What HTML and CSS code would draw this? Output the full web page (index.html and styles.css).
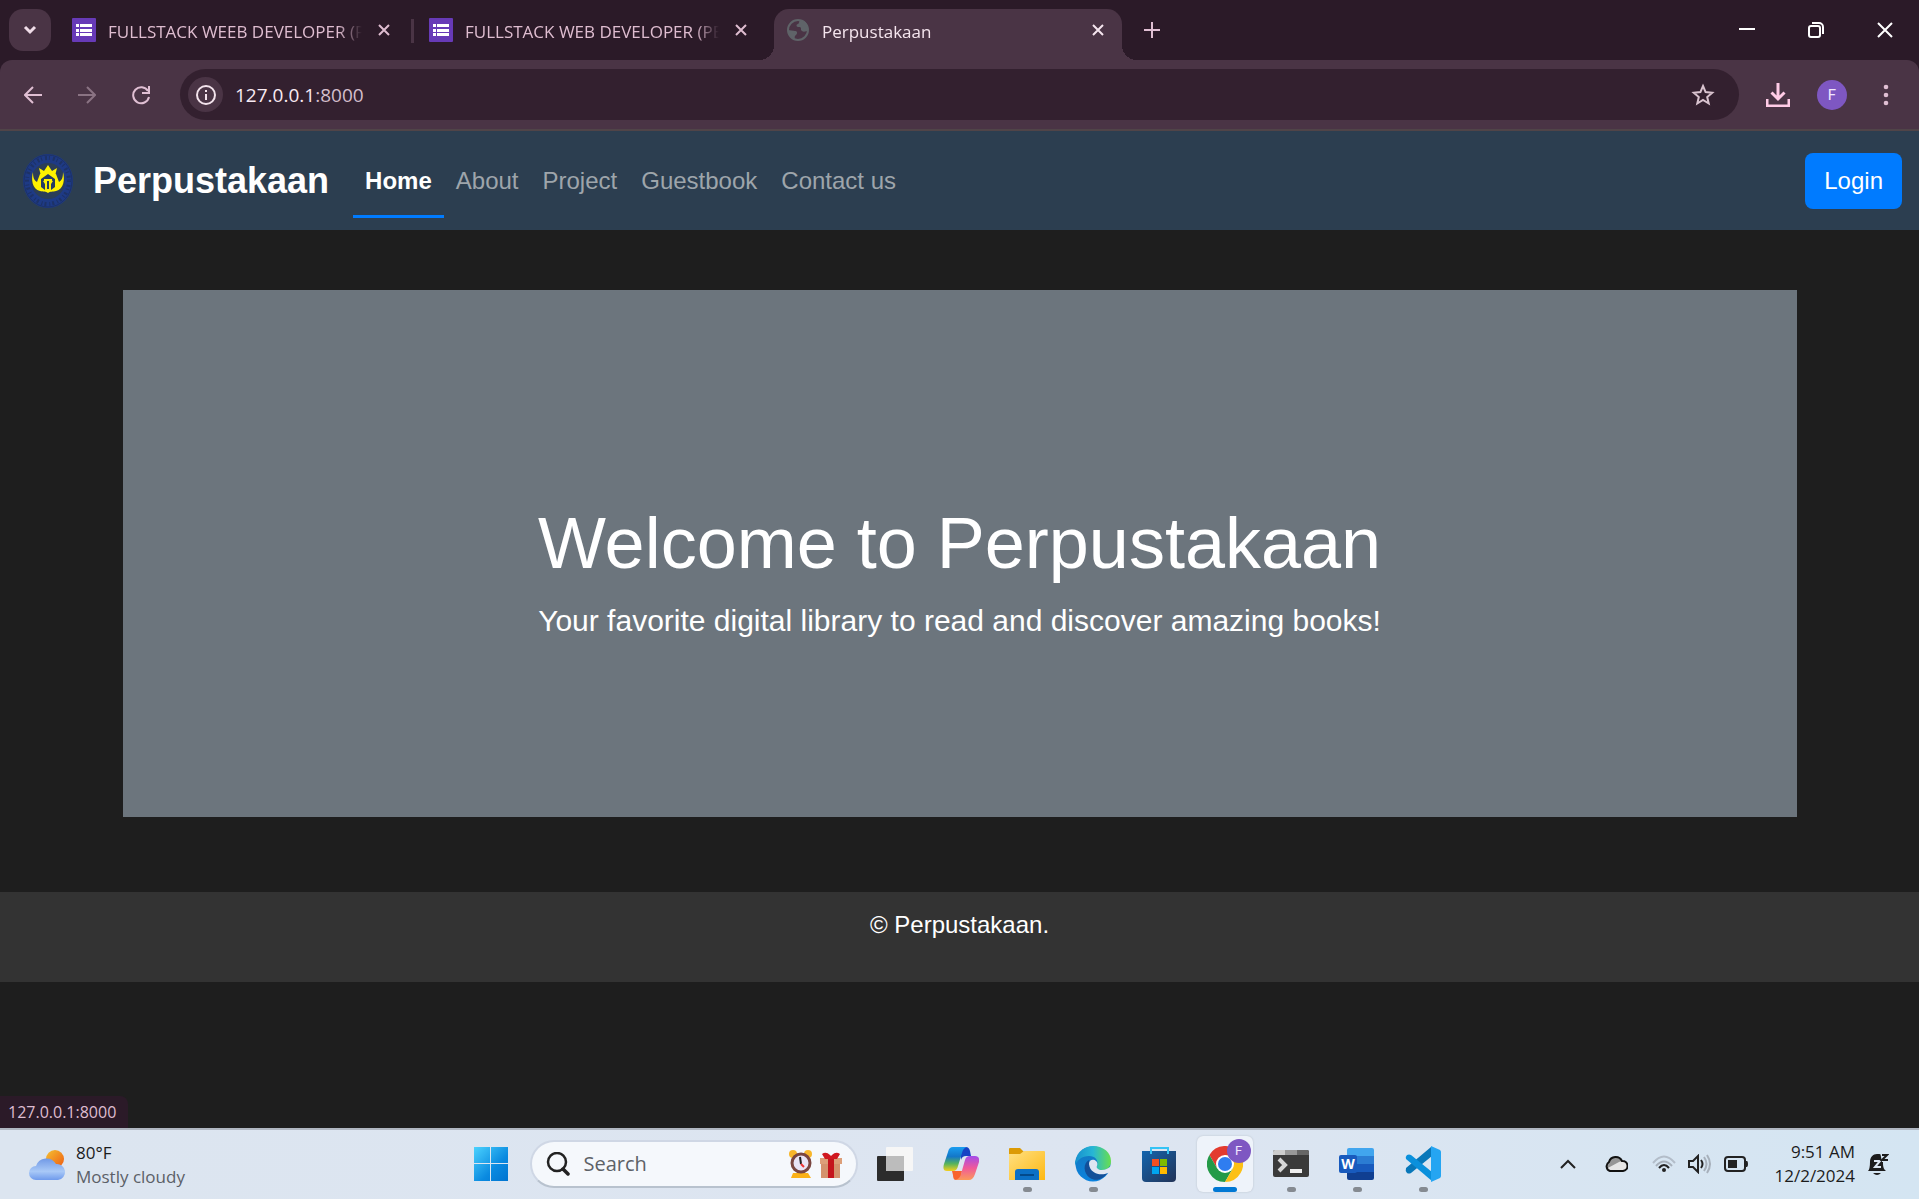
FILE: index.html
```html
<!DOCTYPE html>
<html lang="en">
<head>
<meta charset="utf-8">
<title>Perpustakaan</title>
<link rel="stylesheet" href="styles.css">
</head>
<body>
<div class="tabstrip">
  <button class="tab-search" aria-label="Search tabs"><svg width="14" height="10" viewBox="0 0 14 10"><path d="M2 2l5 5 5-5" fill="none" stroke="#f0dde8" stroke-width="3"/></svg></button>
  <div class="tab">
    <svg class="favicon" viewBox="0 0 24 24"><rect width="24" height="24" rx="1" fill="#673ab7"/><path d="M4 6h3v3H4zM8 6h12v3H8zM4 11h3v3H4zM8 11h12v3H8zM4 15h3v3H4zM8 15h12v3H8z" fill="#fff"/></svg>
    <span class="tab-title">FULLSTACK WEEB DEVELOPER (P</span>
    <button class="tab-close" aria-label="Close tab"><svg width="12" height="12" viewBox="0 0 12 12"><path d="M1 1l10 10M11 1L1 11" stroke="currentColor" stroke-width="2"/></svg></button>
  </div>
  <div class="tab-divider"></div>
  <div class="tab">
    <svg class="favicon" viewBox="0 0 24 24"><rect width="24" height="24" rx="1" fill="#673ab7"/><path d="M4 6h3v3H4zM8 6h12v3H8zM4 11h3v3H4zM8 11h12v3H8zM4 15h3v3H4zM8 15h12v3H8z" fill="#fff"/></svg>
    <span class="tab-title">FULLSTACK WEB DEVELOPER (PE</span>
    <button class="tab-close" aria-label="Close tab"><svg width="12" height="12" viewBox="0 0 12 12"><path d="M1 1l10 10M11 1L1 11" stroke="currentColor" stroke-width="2"/></svg></button>
  </div>
  <div class="tab tab-active">
    <svg class="favicon" viewBox="0 0 24 24"><circle cx="12" cy="12" r="10" fill="none" stroke="#5f6368" stroke-width="2"/><path d="M15 2c-3 1-1 3-3 4-2 0-2 3 0 3 3 0 3 0 3 3 2 3 5 1 7 1 1-6-2-10-7-11zM2 12c2 0 5 1 7 1 2 0 3 2 1 4-2 1-1 3-1 5-5-2-7-6-7-10z" fill="#5f6368"/></svg>
    <span class="tab-title">Perpustakaan</span>
    <button class="tab-close" aria-label="Close tab"><svg width="12" height="12" viewBox="0 0 12 12"><path d="M1 1l10 10M11 1L1 11" stroke="currentColor" stroke-width="2"/></svg></button>
  </div>
  <button class="tab-new" aria-label="New tab"><svg width="16" height="16" viewBox="0 0 16 16"><path d="M8 0v16M0 8h16" stroke="#e0bfd3" stroke-width="2"/></svg></button>
  <div class="window-controls">
    <button aria-label="Minimize"><svg width="16" height="16" viewBox="0 0 16 16"><path d="M0 7h16" stroke="#fff" stroke-width="2"/></svg></button>
    <button aria-label="Restore"><svg width="16" height="16" viewBox="0 0 16 16"><rect x="1" y="4" width="11" height="11" rx="2" fill="none" stroke="#fff" stroke-width="2"/><path d="M4 1h7a4 4 0 0 1 4 4v7" fill="none" stroke="#fff" stroke-width="2"/></svg></button>
    <button aria-label="Close"><svg width="16" height="16" viewBox="0 0 16 16"><path d="M1 1l14 14M15 1L1 15" stroke="#fff" stroke-width="2"/></svg></button>
  </div>
</div>
<div class="toolbar-back">
<div class="toolbar">
  <button class="tool" aria-label="Back"><svg width="18" height="18" viewBox="0 0 18 18"><path d="M18 9H2M9 1L1 9l8 8" fill="none" stroke="#e0bfd3" stroke-width="2"/></svg></button>
  <button class="tool" aria-label="Forward" disabled><svg width="18" height="18" viewBox="0 0 18 18"><path d="M0 9h16M9 1l8 8-8 8" fill="none" stroke="#8a7383" stroke-width="2"/></svg></button>
  <button class="tool" aria-label="Reload"><svg width="20" height="20" viewBox="0 0 20 20"><path d="M17 6A8 8 0 1 0 18 12" fill="none" stroke="#e0bfd3" stroke-width="2"/><path d="M18 1v7h-7" fill="none" stroke="#e0bfd3" stroke-width="2"/></svg></button>
  <div class="omnibox">
    <button class="site-info" aria-label="Site information"><svg width="20" height="20" viewBox="0 0 20 20"><circle cx="10" cy="10" r="9" fill="none" stroke="#f3e3ec" stroke-width="2"/><path d="M10 9v6M10 5v2" stroke="#f3e3ec" stroke-width="2"/></svg></button>
    <div class="url"><label class="host" for="address">127.0.0.1</label><input id="address" value=":8000"></div>
    <button class="bookmark" aria-label="Bookmark"><svg width="24" height="24" viewBox="0 0 24 24"><path d="M12 3l2.600 6.100 6.600.6-5 4.300 1.500 6.500L12 17l-5.700 3.500L7.800 14l-5-4.300 6.600-.6z" fill="none" stroke="#d9c3cf" stroke-width="2"/></svg></button>
  </div>
  <button class="downloads" aria-label="Downloads"><svg width="24" height="24" viewBox="0 0 24 24"><path d="M12 0v15M5.500 9.500L12 16l6.500-6.500M1 16v7h22v-7" fill="none" stroke="#ffcbe6" stroke-width="3"/></svg></button>
  <button class="avatar" aria-label="Profile">F</button>
  <button class="menu" aria-label="Menu"><svg width="6" height="22" viewBox="0 0 6 22"><g fill="#e0bfd3"><circle cx="3" cy="3" r="2.300"/><circle cx="3" cy="11" r="2.300"/><circle cx="3" cy="19" r="2.300"/></g></svg></button>
</div>
</div>
<div class="page">
  <header class="navbar">
    <a class="brand" href="#">
      <svg width="60" height="60" viewBox="0 0 60 60">
        <ellipse cx="30" cy="30" rx="25" ry="27" fill="#1e3a85"/>
        <ellipse cx="30" cy="30" rx="24" ry="26" fill="none" stroke="#1c3168" stroke-width="1"/>
        <ellipse cx="30" cy="30" rx="21" ry="23" fill="none" stroke="#1d3266" stroke-width="4" stroke-dasharray="1 3 2 2"/>
        <ellipse cx="30" cy="30" rx="17" ry="18" fill="#2b3d58"/>
        <path d="M21 17l5 3 4-6 4 6 5-3-2 8H23z" fill="#fff200"/>
        <path d="M15 21c0 6 1 8 4 10l3-8 8-3 8 3 3 8c3-2 4-4 4-10 2 7 1 17-7 19-3 1-6 0-8 2-2-2-5-1-8-2-8-2-9-12-7-19z" fill="#fff200"/>
        <path d="M23 28l7-5 7 5v8l-4 3v-6l2-3-4-1v9h-2v-9l-4 1 2 3v6l-4-3z" fill="#263b63"/><path d="M26 28h8v2h-8z" fill="#fff200"/>
      </svg>
      <span>Perpustakaan</span>
    </a>
    <nav class="nav">
      <a class="nav-link active" href="#">Home</a>
      <a class="nav-link" href="#">About</a>
      <a class="nav-link" href="#">Project</a>
      <a class="nav-link" href="#">Guestbook</a>
      <a class="nav-link" href="#">Contact us</a>
    </nav>
    <button class="login">Login</button>
  </header>
  <main class="container">
    <section class="hero">
      <h1>Welcome to Perpustakaan</h1>
      <p>Your favorite digital library to read and discover amazing books!</p>
    </section>
  </main>
  <footer class="footer">© Perpustakaan.</footer>
  <div class="status">127.0.0.1:8000</div>
</div>
<div class="taskbar">
  <div class="weather">
    <svg width="38" height="32" viewBox="0 0 38 32">
      <defs><linearGradient id="sun" x1="0" y1="0" x2="1" y2="1"><stop offset="0" stop-color="#f5c131"/><stop offset="1" stop-color="#ee5a12"/></linearGradient>
      <linearGradient id="cld" x1="0" y1="0" x2="0" y2="1"><stop offset="0" stop-color="#7199e6"/><stop offset=".6" stop-color="#a9c9f7"/><stop offset="1" stop-color="#6f9aec"/></linearGradient></defs>
      <circle cx="27" cy="10" r="9" fill="url(#sun)"/>
      <path d="M8 31a7 7 0 0 1 0-14 11 11 0 0 1 20-2 8 8 0 0 1 2 16z" fill="url(#cld)"/>
    </svg>
    <div class="weather-text"><span>80°F</span><span class="muted">Mostly cloudy</span></div>
  </div>
  <div class="apps">
    <button class="app app-start" aria-label="Start"><svg width="36" height="36" viewBox="0 0 36 36"><defs><linearGradient id="win" gradientUnits="userSpaceOnUse" x1="0" y1="0" x2="36" y2="36"><stop offset="0" stop-color="#4fd6ff"/><stop offset=".6" stop-color="#0a8ae0"/><stop offset="1" stop-color="#0072cf"/></linearGradient></defs><path d="M1 1h16v16H1zM18 1h17v16H18zM1 18h16v17H1zM18 18h17v17H18z" fill="url(#win)"/></svg></button>
    <div class="search">
      <svg width="24" height="24" viewBox="0 0 24 24"><circle cx="11" cy="10" r="9" fill="none" stroke="#222" stroke-width="2.500"/><path d="M17 17l5 5" stroke="#222" stroke-width="3.500" stroke-linecap="round"/></svg>
      <input aria-label="Search" placeholder="Search">
      <svg width="54" height="30" viewBox="0 0 54 30">
        <path d="M5 24h15l3 5H3z" fill="#fbb117"/><circle cx="5" cy="5" r="4" fill="#f8b62b"/><circle cx="20" cy="5" r="4" fill="#f8b62b"/><circle cx="13" cy="14" r="9" fill="#e9e4f5" stroke="#7a4640" stroke-width="3"/><path d="M12 8l1 7" stroke="#222" stroke-width="2"/><path d="M13 15l3 3" stroke="#e33" stroke-width="2"/>
        <path d="M33 13h19v16H33z" fill="#d4926d"/><path d="M32 9h22v6H32z" fill="#dd9f79"/><path d="M40 9h6v20h-6z" fill="#c4141c"/><path d="M34 5q4-3 8 1l1 1 1-1q4-4 8-1l-3 5H37z" fill="#d01820"/>
      </svg>
    </div>
    <button class="app" aria-label="Task view"><svg width="36" height="36" viewBox="0 0 36 36"><rect x="0" y="10" width="27" height="25" rx="1" fill="#2c2c2c"/><rect x="9" y="1" width="27" height="24" rx="1" fill="#f6f6f6"/><path d="M9 10h18v15H9z" fill="#bcbcbc"/></svg></button>
    <button class="app" aria-label="Copilot"><svg width="36" height="36" viewBox="0 0 36 36"><defs><linearGradient id="cp1" x1="0" y1="0" x2="0" y2="1"><stop offset="0" stop-color="#1a9df0"/><stop offset=".4" stop-color="#1377c8"/><stop offset=".7" stop-color="#58b45b"/><stop offset="1" stop-color="#f5cf1d"/></linearGradient><linearGradient id="cp2" x1="0" y1="0" x2="0" y2="1"><stop offset="0" stop-color="#a34bea"/><stop offset=".5" stop-color="#f0599a"/><stop offset="1" stop-color="#fb9a5a"/></linearGradient></defs>
      <path d="M17 1h6q3 0 4 4l1 5h-5q-4 0-5 4z" fill="#1742c4"/><path d="M9 25h10l-1 6-3 3h-2q-3 0-3-5z" fill="#f8642d"/><path d="M10 1h14q-4 1-5 6l-4 13q-1 5-5 5H4q-5 0-3-7L5 6q1-5 5-5z" fill="url(#cp1)"/><path d="M26 34H12q5-1 6-6l4-14q1-4 5-4h5q5 0 4 6l-4 12q-2 6-6 6z" fill="url(#cp2)"/></svg></button>
    <button class="app running" aria-label="File Explorer"><svg width="36" height="36" viewBox="0 0 36 36"><defs><linearGradient id="fold" x1="0" y1="0" x2="1" y2="1"><stop offset="0" stop-color="#ffe082"/><stop offset="1" stop-color="#fdb813"/></linearGradient></defs><path d="M0 3q0-1 1-1h10l4 4v4H0z" fill="#dc9a04"/><path d="M0 8h11l4-3h20q1 0 1 1v28H0z" fill="url(#fold)"/><path d="M6 34v-8q0-3 3-3h18q3 0 3 3v8z" fill="#0b70c6"/><path d="M11 29h14" stroke="#034a8b" stroke-width="2"/></svg></button>
    <button class="app running" aria-label="Edge"><svg width="36" height="36" viewBox="0 0 36 36"><defs><linearGradient id="ed1"><stop offset="0" stop-color="#1790cf"/><stop offset=".5" stop-color="#27b6d5"/><stop offset="1" stop-color="#69df4d"/></linearGradient><linearGradient id="ed2" x1="0" y1="0" x2="0" y2="1"><stop offset="0" stop-color="#1578bc"/><stop offset="1" stop-color="#0b82de"/></linearGradient></defs><circle cx="18" cy="18" r="17.500" fill="url(#ed2)"/><path d="M0 16C2 5 10 0 18 0c11 0 18 7 18 15 0 7-5 9-9 9-5 0-6-2-5-4 2-6-2-10-8-10C7 10 2 14 0 20z" fill="url(#ed1)"/><path d="M14 14c-6 3-6 13 1 18 6 4 14 1 18-6-6 3-17 2-19-12z" fill="#124f99"/><path d="M14 18c0-5 5-5 7-3 3 3 0 5 1 7 2 3 9 3 14-2v6l-3 1c-7 3-18 1-19-9z" fill="#dfe6f2"/></svg></button>
    <button class="app" aria-label="Microsoft Store"><svg width="36" height="36" viewBox="0 0 36 36"><defs><linearGradient id="st" x1="0" y1="0" x2="1" y2="1"><stop offset="0" stop-color="#1465ae"/><stop offset="1" stop-color="#223357"/></linearGradient></defs><path d="M1 5h34v27q0 4-4 4H5q-4 0-4-4z" fill="url(#st)"/><path d="M10 8V2h17v6" fill="none" stroke="#35c3f5" stroke-width="2"/><path d="M11 13h7v7h-7z" fill="#f25022"/><path d="M19 13h7v7h-7z" fill="#7fba00"/><path d="M11 21h7v7h-7z" fill="#00a4ef"/><path d="M19 21h7v7h-7z" fill="#ffb900"/></svg></button>
    <button class="app running focused" aria-label="Chrome"><svg width="36" height="36" viewBox="0 0 36 36"><path d="M18 9h15.600A18 18 0 0 0 2.400 9l7.800 13.500z" fill="#e33b2e"/><path d="M2.400 9A18 18 0 0 0 18 36l7.800-13.500H10.200z" fill="#249a48"/><path d="M18 36A18 18 0 0 0 33.600 9H18l7.800 13.500z" fill="#fcc015"/><circle cx="18" cy="18" r="9" fill="#fff"/><circle cx="18" cy="18" r="7" fill="#2f7df0"/></svg><span class="app-badge">F</span></button>
    <button class="app running" aria-label="Terminal"><svg width="36" height="36" viewBox="0 0 36 36"><rect y="4" width="36" height="27" rx="2" fill="#3a3a3a"/><path d="M0 9V6q0-2 2-2h10v5z" fill="#ccc"/><path d="M12 4h12v5H12z" fill="#989898"/><path d="M24 4h10q2 0 2 2v3H24z" fill="#666"/><path d="M6 13l6 6-6 6" fill="none" stroke="#d5d5d5" stroke-width="4"/><path d="M17 23h12v4H17z" fill="#eee"/></svg></button>
    <button class="app running" aria-label="Word"><svg width="36" height="36" viewBox="0 0 36 36"><path d="M8 4q0-2 2-2h23q2 0 2 2v6H8z" fill="#41a5ee"/><path d="M8 10h27v8H8z" fill="#2b7cd3"/><path d="M8 18h27v8H8z" fill="#185abd"/><path d="M8 26h27v6q0 2-2 2H10q-2 0-2-2z" fill="#103f91"/><rect y="9" width="18" height="18" rx="2" fill="#185abd"/><text x="9" y="23" text-anchor="middle" class="word-letter">W</text></svg></button>
    <button class="app running" aria-label="Visual Studio Code"><svg width="36" height="36" viewBox="0 0 36 36"><path d="M26 1L1 22q-1 3 1 5 2 1 4 0L27 10z" fill="#0877b9"/><path d="M1 13q-1-2 1-4 2-1 4 0l21 17v9z" fill="#0a90dc"/><path d="M26 0l9 4q1 1 1 2v24q0 1-1 2l-9 4z" fill="#25a5f2"/></svg></button>
  </div>
  <div class="tray">
    <button class="chevron" aria-label="Hidden icons"><svg width="16" height="10" viewBox="0 0 16 10"><path d="M1 9l7-7 7 7" fill="none" stroke="#222" stroke-width="2"/></svg></button>
    <svg class="cloud" width="24" height="18" viewBox="0 0 24 18"><path d="M6 16a5 5 0 0 1-1-9 7 7 0 0 1 13-1 5 5 0 0 1 1 10z" fill="#969696"/><path d="M2 14l13-7c4-2 8 1 8 4s-2 5-4 5H6q-3 0-4-2z" fill="#e6e6e6"/><path d="M6 16a5 5 0 0 1-1-9 7 7 0 0 1 13-1 5 5 0 0 1 1 10z" fill="none" stroke="#111" stroke-width="2"/></svg>
    <svg width="24" height="18" viewBox="0 0 24 18"><g fill="none" stroke-width="2"><path d="M1 8q11-13 22 0" stroke="#b3bdc9"/><path d="M4 11q8-9 16 0" stroke="#a7b0bb"/><path d="M7 13q5-6 10 0" stroke="#222"/></g><circle cx="12" cy="15" r="2" fill="#222"/></svg>
    <svg width="24" height="20" viewBox="0 0 24 20"><g fill="none" stroke-width="2"><path d="M1 7h4l5-5v16l-5-5H1zM13 6q3 4 0 8" stroke="#222"/><path d="M16 3q5 7 0 14M19 1q6 9 0 18" stroke="#a7b0bb"/></g></svg>
    <svg width="24" height="18" viewBox="0 0 24 18"><rect x="1" y="2" width="20" height="14" rx="3" fill="none" stroke="#222" stroke-width="2"/><path d="M4 5h9v8H4z" fill="#222"/><path d="M22 6h1q1 0 1 3t-1 3h-1z" fill="#222"/></svg>
    <div class="clock"><span>9:51 AM</span><span>12/2/2024</span></div>
    <svg width="22" height="24" viewBox="0 0 22 24"><path d="M1 19q2-2 2-9c0-5 3-8 7-8 3 0 5 0 6 2v8q0 5 3 7z" fill="#1c1c1c"/><path d="M6 21h8q-4 4-8 0z" fill="#1c1c1c"/><path d="M7 9h6l-5 6h6" fill="none" stroke="#dce6f1" stroke-width="2"/><path d="M13 0h9v10h-7z" fill="#d7e5f2"/><path d="M15 3h5l-5 5h6" fill="none" stroke="#1c1c1c" stroke-width="2"/></svg>
  </div>
</div>
</body>
</html>
```
FILE: styles.css
```css
* { box-sizing: border-box; }

body {
  margin: 0;
  min-height: 100vh;
  display: flex;
  flex-direction: column;
  background: #1e1e1e;
  font-family: "Open Sans", "Noto Sans", sans-serif;
}

button {
  border: 0;
  padding: 0;
  background: none;
  font: inherit;
  color: inherit;
  display: flex;
  align-items: center;
  justify-content: center;
}

svg { display: block; flex: none; }
a { text-decoration: none; color: inherit; }

/* Tab strip */
.tabstrip {
  display: flex;
  align-items: flex-end;
  height: 60px;
  padding-left: 9px;
  background: #2b1a28;
  color: #dfbdd0;
  font-size: 17px;
}
.tab-search {
  width: 42px;
  height: 42px;
  margin: 0 9px 9px 0;
  border-radius: 14px;
  background: #4a3445;
}
.tab {
  display: flex;
  align-items: center;
  height: 51px;
  padding: 0 18px 6px 12px;
  margin-right: 9px;
  gap: 12px;
  flex: 0 1 348px;
  min-width: 0;
}
.tab-divider {
  width: 3px;
  height: 24px;
  margin: 0 3px 17px -6px;
  background: #4a3445;
  flex: none;
}
.favicon { width: 24px; height: 24px; margin-bottom: 4px; }
.tab-title {
  flex: 1;
  line-height: 24px;
  white-space: nowrap;
  overflow: hidden;
  margin-right: 4px;
  mask-image: linear-gradient(to right, #000 calc(100% - 24px), transparent);
}
.tab-close { width: 12px; height: 12px; margin-bottom: 4px; }
.tab-active {
  position: relative;
  margin-right: 0;
  border-radius: 15px 15px 0 0;
  background: #4a3445;
  color: #f5e5ee;
}
.tab-active::before,
.tab-active::after {
  content: "";
  position: absolute;
  bottom: 0;
  width: 15px;
  height: 15px;
}
.tab-active::before { right: 100%; background: radial-gradient(circle at 0 0, transparent 15px, #4a3445 15px); }
.tab-active::after { left: 100%; background: radial-gradient(circle at 100% 0, transparent 15px, #4a3445 15px); }
.tab-new { width: 42px; height: 42px; margin: 0 0 9px 9px; }
.window-controls { display: flex; margin-left: auto; }
.window-controls button { width: 69px; height: 60px; }

/* Toolbar */
.toolbar-back { background: #2b1a28; }
.toolbar {
  display: flex;
  align-items: center;
  height: 71px;
  padding: 0 24px 0 6px;
  border-bottom: 2px solid #504448;
  border-radius: 12px 12px 0 0;
  background: #4a3445;
}
.tool { width: 54px; height: 42px; }
.omnibox {
  display: flex;
  align-items: center;
  flex: 1;
  height: 51px;
  margin: 0 24px 0 12px;
  padding: 0 24px 0 8px;
  border-radius: 26px;
  background: #33202f;
}
.site-info { width: 35px; height: 35px; border-radius: 50%; background: #4a3445; }
.url {
  display: flex;
  flex: 1;
  margin-left: 12px;
  font-size: 19px;
  line-height: 30px;
  color: #f8eaf2;
}
.url input {
  flex: 1;
  min-width: 0;
  padding: 0;
  border: 0;
  background: none;
  font: inherit;
  color: #d3becb;
}
.downloads { width: 30px; height: 36px; }
.avatar {
  width: 30px;
  height: 30px;
  margin: 0 36px 0 24px;
  border-radius: 50%;
  background: #7e57c2;
  color: #f1e7ff;
  font: 15px Roboto, sans-serif;
}
.menu { width: 6px; margin-right: 6px; }

/* Page */
.page {
  position: relative;
  flex: 1;
  font: 24px/36px "Liberation Sans", Arial, sans-serif;
  color: #fff;
}
.navbar {
  display: flex;
  align-items: center;
  padding: 12px 17px 12px 18px;
  background: #2c3e50;
}
.brand {
  display: flex;
  align-items: center;
  gap: 15px;
  margin-right: 24px;
  font-size: 36px;
  font-weight: bold;
}
.nav { display: flex; }
.nav-link {
  position: relative;
  padding: 18px 12px;
  line-height: 39px;
  color: #9ea5ab;
}
.nav-link.active { color: #fff; font-weight: bold; }
.nav-link.active::after {
  content: "";
  position: absolute;
  left: 0;
  right: 0;
  bottom: 0;
  height: 3px;
  background: #007bff;
}
.login {
  margin-left: auto;
  padding: 10px 19px;
  border-radius: 8px;
  background: #007bff;
}
.container { max-width: 1710px; margin: 60px auto 75px; padding: 0 18px; }
.hero { padding: 210px 24px 174px; background: #6c757d; text-align: center; }
.hero h1 { margin: 0 0 12px; font-size: 72px; font-weight: normal; line-height: 86px; }
.hero p { margin: 0; font-size: 30px; line-height: 45px; }
.footer { padding: 15px 24px 39px; background: #333; text-align: center; }
.status {
  position: absolute;
  left: 0;
  bottom: 0;
  padding: 1px 12px 1px 8px;
  border-radius: 0 8px 0 0;
  background: #2b1a28;
  color: #dfbdd0;
  font: 16px/30px "Open Sans", "Noto Sans", sans-serif;
}

/* Taskbar */
.taskbar {
  display: grid;
  grid-template-columns: 1fr auto 1fr;
  align-items: center;
  height: 71px;
  border-top: 2px solid #b0b7c2;
  background: linear-gradient(to right, #dce5f0, #dde5f1 60%, #d4e5f2);
  color: #1c1c1c;
  font-size: 17px;
  line-height: 24px;
}
.weather { display: flex; align-items: center; gap: 10px; padding-left: 28px; }
.weather-text, .clock { display: flex; flex-direction: column; }
.muted { color: #5b6067; }
.apps { display: flex; align-items: center; padding: 0 6px 2px 0; }
.app {
  position: relative;
  width: 56px;
  height: 56px;
  margin: 0 5px;
  border-radius: 6px;
}
.running::after {
  content: "";
  position: absolute;
  bottom: 0;
  left: 50%;
  width: 9px;
  height: 5px;
  margin-left: -4px;
  border-radius: 3px;
  background: #858a91;
}
.focused { background: #eef3fa; box-shadow: 0 0 2px #b5bdc8; }
.focused::after { width: 24px; margin-left: -12px; background: #0078d4; }
.app-badge {
  position: absolute;
  top: 3px;
  right: 2px;
  width: 24px;
  height: 24px;
  border-radius: 50%;
  background: #7e57c2;
  color: #f1e7ff;
  font: 13px/24px Roboto, sans-serif;
}
.word-letter { font: bold 14px "Open Sans", sans-serif; fill: #fff; }
.search {
  display: flex;
  align-items: center;
  width: 328px;
  height: 48px;
  margin: 0 4px 0 6px;
  padding: 0 14px;
  gap: 14px;
  border: 2px solid #cfd7e5;
  border-bottom-color: #b8c2ce;
  border-radius: 24px;
  background: #f5f8fc;
}
.search input {
  flex: 1;
  min-width: 0;
  padding: 0;
  border: 0;
  background: none;
  font: 20px/28px "Open Sans", "Noto Sans", sans-serif;
}
.search input::placeholder { color: #5d6167; opacity: 1; }
.tray { display: flex; align-items: center; justify-content: flex-end; gap: 12px; padding: 0 30px 2px 0; }
.chevron { margin-right: 16px; }
.cloud { margin-right: 12px; }
.clock { align-items: flex-end; margin-left: 14px; }
```
